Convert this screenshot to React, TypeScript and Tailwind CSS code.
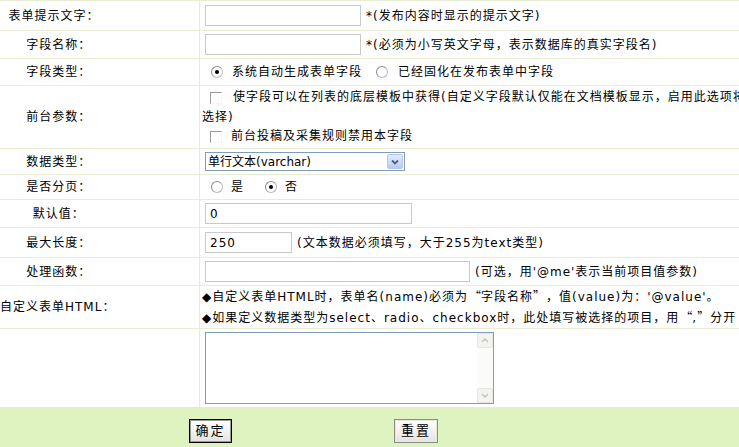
const LINE = 'border-[#e8edd4]';

function Radio({ checked = false }: { checked?: boolean }) {
  return (
    <span className="relative inline-block h-[12px] w-[12px] shrink-0 rounded-full border border-[#b9b9b9] border-l-[#8c8c8c] border-t-[#8c8c8c] bg-white align-middle">
      {checked && <span className="absolute left-[3px] top-[3px] h-[4px] w-[4px] rounded-full bg-black" />}
    </span>
  );
}

function Check() {
  return (
    <span className="inline-block h-[12px] w-[12px] shrink-0 border border-[#f4f4f4] border-l-[#9a9a9a] border-t-[#9a9a9a] bg-white align-middle" />
  );
}

// fullwidth quote cells: opening sits right, closing sits left
function Open() {
  return <span className="inline-block w-[13px] text-right font-['Noto_Sans_CJK_SC',sans-serif] tracking-normal">“</span>;
}
function Close() {
  return <span className="inline-block w-[13px] text-left font-['Noto_Sans_CJK_SC',sans-serif] tracking-normal">”</span>;
}
function Q({ children }: { children: React.ReactNode }) {
  return <span className="font-['Noto_Sans_CJK_SC',sans-serif]">{children}</span>;
}

function Label({ children }: { children: React.ReactNode }) {
  return (
    <div className={`flex w-[200px] shrink-0 items-center self-stretch border-r ${LINE}`}>
      <div className="w-[108px] whitespace-nowrap text-center">{children}</div>
    </div>
  );
}

function TextInput({ value = '', className = '' }: { value?: string; className?: string }) {
  return (
    <div className={`ml-[3px] flex h-[21px] shrink-0 items-center border border-[#c9c9c9] bg-white pl-[4px] ${className}`}>
      {value}
    </div>
  );
}

export default function App() {
  return (
    <div className="h-[447px] w-[739px] overflow-hidden bg-white font-['DejaVu_Sans','Noto_Sans_CJK_SC',sans-serif] text-[12px] tracking-[1px] text-black">
      <div className={`w-[758px] border-t ${LINE}`}>
        {/* 表单提示文字 */}
        <div className={`flex h-[30px] border-b ${LINE}`}>
          <Label>表单提示文字：</Label>
          <div className="flex flex-1 items-center pl-[2px]">
            <TextInput className="w-[156px]" />
            <span className="ml-[5px] whitespace-nowrap">*(发布内容时显示的提示文字)</span>
          </div>
        </div>

        {/* 字段名称 */}
        <div className={`flex h-[28px] border-b ${LINE}`}>
          <Label>&nbsp;&nbsp;字段名称：</Label>
          <div className="flex flex-1 items-center pl-[2px]">
            <TextInput className="w-[156px]" />
            <span className="ml-[5px] whitespace-nowrap">*(必须为小写英文字母，表示数据库的真实字段名)</span>
          </div>
        </div>

        {/* 字段类型 */}
        <div className={`flex h-[27px] border-b ${LINE}`}>
          <Label>&nbsp;&nbsp;字段类型：</Label>
          <div className="flex flex-1 items-center pl-[2px] whitespace-nowrap">
            <span className="ml-[9px] mr-[9px] inline-flex"><Radio checked /></span>
            <span>系统自动生成表单字段</span>
            <span className="ml-[14px] mr-[10px] inline-flex"><Radio /></span>
            <span>已经固化在发布表单中字段</span>
          </div>
        </div>

        {/* 前台参数 */}
        <div className={`flex h-[63px] border-b ${LINE}`}>
          <Label>&nbsp;&nbsp;前台参数：</Label>
          <div className="flex flex-1 flex-col justify-center pl-[2px] pr-[4px] leading-[19px]">
            <div>
              <span className="ml-[8px] mr-[11px] inline-block align-[-1px]"><Check /></span>
              使字段可以在列表的底层模板中获得(自定义字段默认仅能在文档模板显示，启用此选项将选择)
            </div>
            <div className="whitespace-nowrap">
              <span className="ml-[8px] mr-[9px] inline-block align-[-1px]"><Check /></span>
              前台投稿及采集规则禁用本字段
            </div>
          </div>
        </div>

        {/* 数据类型 */}
        <div className={`flex h-[26px] border-b ${LINE}`}>
          <Label>&nbsp;&nbsp;数据类型：</Label>
          <div className="flex flex-1 items-center pl-[2px]">
            <div className="ml-[3px] flex h-[19px] w-[200px] items-center border border-[#7f9db9] bg-white pl-[2px] tracking-normal">
              <span className="flex-1 whitespace-nowrap">单行文本(varchar)</span>
              <span className="mr-[1px] flex h-[15px] w-[16px] items-center justify-center rounded-[2px] border border-[#b5c8ec] bg-gradient-to-b from-[#e3ecfd] to-[#b7cbf4]">
                <svg width="8" height="6" viewBox="0 0 8 6">
                  <path d="M1 1.5 L4 4.5 L7 1.5" fill="none" stroke="#4d6185" strokeWidth="1.8" />
                </svg>
              </span>
            </div>
          </div>
        </div>

        {/* 是否分页 */}
        <div className={`flex h-[25px] border-b ${LINE}`}>
          <Label>&nbsp;&nbsp;是否分页：</Label>
          <div className="flex flex-1 items-center pl-[2px] whitespace-nowrap">
            <span className="ml-[9px] mr-[8px] inline-flex"><Radio /></span>
            <span>是</span>
            <span className="ml-[21px] mr-[8px] inline-flex"><Radio checked /></span>
            <span>否</span>
          </div>
        </div>

        {/* 默认值 */}
        <div className={`flex h-[28px] border-b ${LINE}`}>
          <Label>&nbsp;&nbsp;默认值：</Label>
          <div className="flex flex-1 items-center pl-[2px]">
            <TextInput className="w-[207px]" value="0" />
          </div>
        </div>

        {/* 最大长度 */}
        <div className={`flex h-[30px] border-b ${LINE}`}>
          <Label>&nbsp;&nbsp;最大长度：</Label>
          <div className="flex flex-1 items-center pl-[2px]">
            <TextInput className="w-[87px]" value="250" />
            <span className="ml-[5px] whitespace-nowrap">(文本数据必须填写，大于255为text类型)</span>
          </div>
        </div>

        {/* 处理函数 */}
        <div className={`flex h-[28px] border-b ${LINE}`}>
          <Label>&nbsp;&nbsp;处理函数：</Label>
          <div className="flex flex-1 items-center pl-[2px]">
            <TextInput className="w-[265px]" />
            <span className="ml-[5px] whitespace-nowrap">(可选，用'@me'表示当前项目值参数)</span>
          </div>
        </div>

        {/* 自定义表单HTML */}
        <div className={`flex h-[43px] border-b ${LINE}`}>
          <Label>自定义表单HTML：</Label>
          <div className="flex flex-1 flex-col justify-center whitespace-nowrap pl-[2px] leading-[19px]">
            <div>◆自定义表单HTML时，表单名(name)必须为<Open />字段名称<Close />，值(value)为<Q>：</Q>'@value'<Q>。</Q></div>
            <div>◆如果定义数据类型为select<Q>、</Q>radio<Q>、</Q>checkbox时，此处填写被选择的项目，用<Open />,<Close />分开</div>
          </div>
        </div>

        {/* textarea */}
        <div className="flex h-[78px]">
          <div className={`w-[200px] shrink-0 border-r ${LINE}`} />
          <div className="flex-1 pl-[5px] pt-[3px]">
            <div className="flex h-[72px] w-[289px] justify-end border border-[#7f9db9] bg-white">
              <div className="flex w-[16px] flex-col justify-between bg-[#fbfbf9]">
                <span className="flex h-[15px] items-center justify-center rounded-[2px] border border-[#e6e6e2] bg-[#f3f3ef]">
                  <svg width="8" height="5" viewBox="0 0 8 5">
                    <path d="M1 4 L4 1 L7 4" fill="none" stroke="#c4c4bc" strokeWidth="1.5" />
                  </svg>
                </span>
                <span className="flex h-[15px] items-center justify-center rounded-[2px] border border-[#e6e6e2] bg-[#f3f3ef]">
                  <svg width="8" height="5" viewBox="0 0 8 5">
                    <path d="M1 1 L4 4 L7 1" fill="none" stroke="#c4c4bc" strokeWidth="1.5" />
                  </svg>
                </span>
              </div>
            </div>
          </div>
        </div>
      </div>

      {/* footer */}
      <div className="flex h-[40px] items-start bg-[#dff3c1] pl-[189px] pt-[12px]">
        <button className="flex h-[24px] w-[43px] items-center justify-center border border-black bg-gradient-to-b from-white to-[#e4e4de] text-[13px] tracking-[2px] shadow-[inset_0_0_0_1px_#9a9a96]">
          确定
        </button>
        <button className="ml-[162px] flex h-[24px] w-[44px] items-center justify-center border border-[#8a8a86] bg-gradient-to-b from-white to-[#e4e4de] text-[13px] tracking-[2px] shadow-[inset_0_0_0_1px_#e8e8e4]">
          重置
        </button>
      </div>
    </div>
  );
}
